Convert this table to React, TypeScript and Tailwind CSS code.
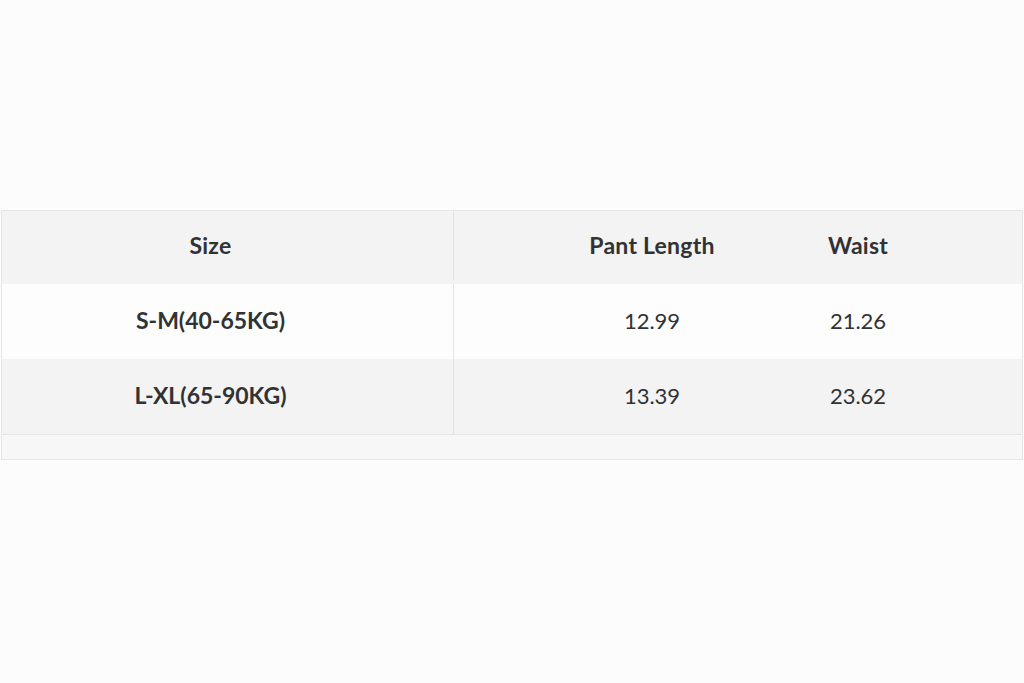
const rows = [
  { size: 'S-M(40-65KG)', length: '12.99', waist: '21.26' },
  { size: 'L-XL(65-90KG)', length: '13.39', waist: '23.62' },
];

const App = () => {
  return (
    <div
      className="min-h-[683px] w-full bg-[#fcfcfc] pt-[210px] text-[#303234]"
      style={{ fontFamily: 'Lato, "Open Sans", sans-serif' }}
    >
      <div className="mx-[1px] border border-[#e6e6e6]">
        {/* header */}
        <div className="flex h-[73px] items-center bg-[#f3f3f3] pb-[4px] text-[23px] font-bold tracking-[0.01em]">
          <div className="flex h-full w-[452px] items-center justify-center border-r border-[#e3e3e3] pr-[34px]">
            Size
          </div>
          <div className="w-[334px] pl-[62px] text-center">Pant Length</div>
          <div className="w-[140px] text-center">Waist</div>
          <div className="flex-1" />
        </div>
        {rows.map((row, i) => (
          <div
            key={row.size}
            className={`flex h-[75px] items-center text-[22px] ${
              i % 2 === 0 ? 'bg-[#fdfdfd]' : 'bg-[#f3f3f3]'
            }`}
          >
            <div className="flex h-full w-[452px] items-center justify-center border-r border-[#e3e3e3] pb-[3px] pr-[34px] text-[23px] font-bold">
              {row.size}
            </div>
            <div className="w-[334px] pb-[3px] pl-[62px] text-center">{row.length}</div>
            <div className="w-[140px] pb-[3px] text-center">{row.waist}</div>
            <div className="flex-1" />
          </div>
        ))}
        <div className="h-[25px] border-t border-[#e6e6e6] bg-[#f7f7f7]" />
      </div>
    </div>
  );
};

export default App;
